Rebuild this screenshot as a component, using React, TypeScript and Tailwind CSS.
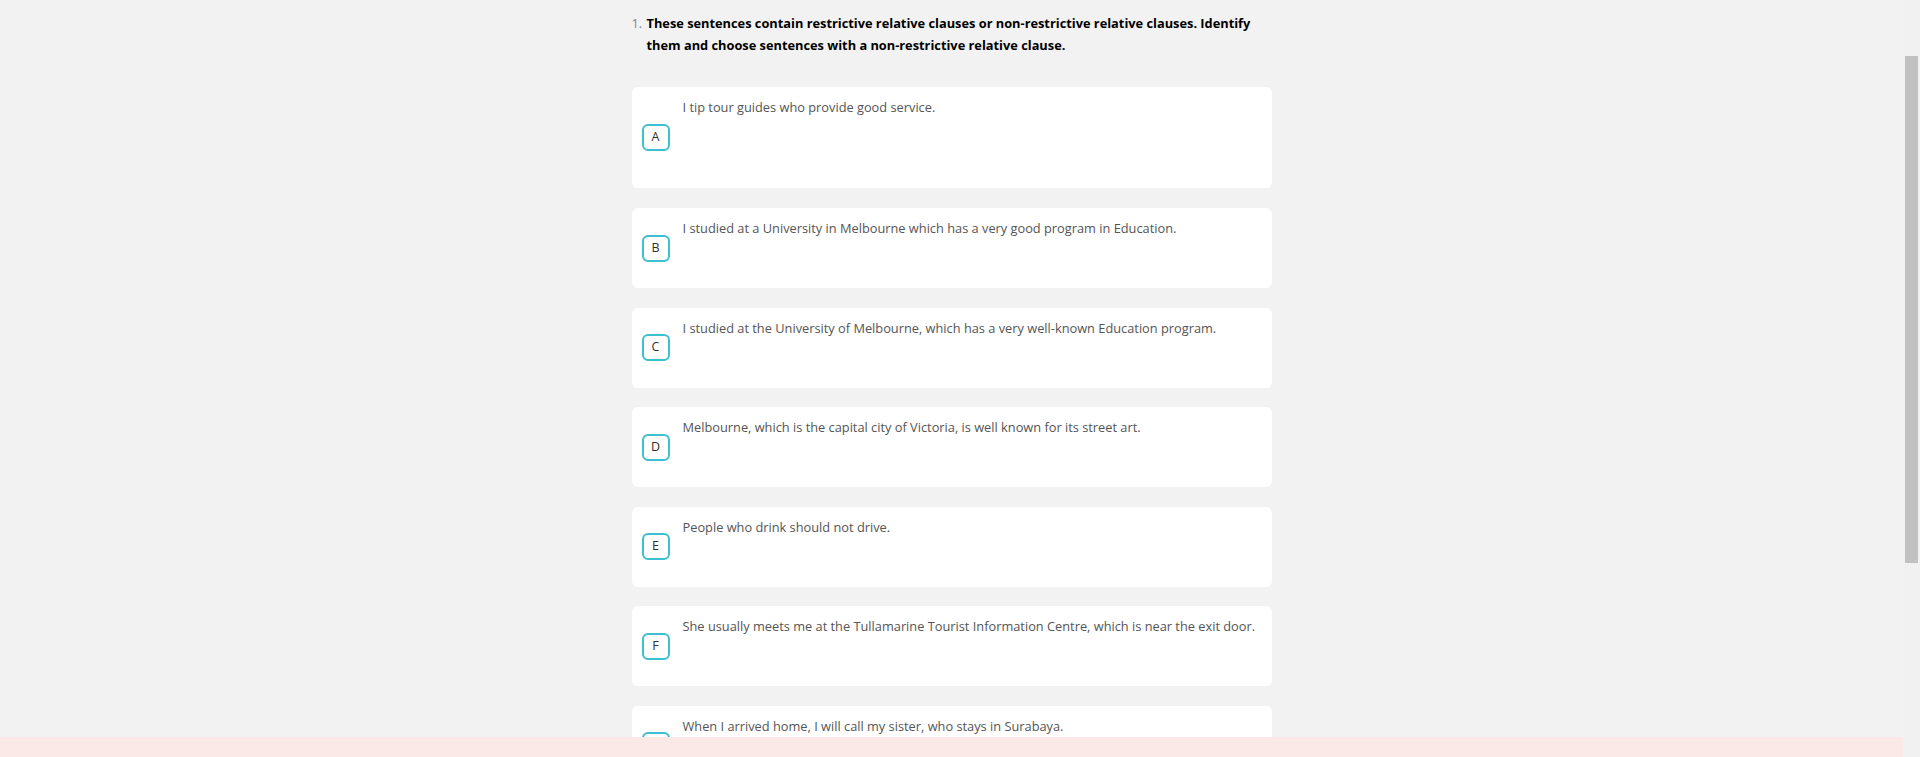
import React from "react";

const OPTIONS: { key: string; text: string; tall?: boolean }[] = [
  { key: "A", text: "I tip tour guides who provide good service.", tall: true },
  { key: "B", text: "I studied at a University in Melbourne which has a very good program in Education." },
  { key: "C", text: "I studied at the University of Melbourne, which has a very well-known Education program." },
  { key: "D", text: "Melbourne, which is the capital city of Victoria, is well known for its street art." },
  { key: "E", text: "People who drink should not drive." },
  { key: "F", text: "She usually meets me at the Tullamarine Tourist Information Centre, which is near the exit door." },
  { key: "G", text: "When I arrived home, I will call my sister, who stays in Surabaya." },
];

function OptionCard({ letter, text, tall }: { letter: string; text: string; tall?: boolean }) {
  return (
    <div
      className={
        tall
          ? "flex h-[101px] shrink-0 rounded-[6px] bg-white mb-[20px]"
          : "flex h-[80px] shrink-0 rounded-[6px] bg-white mb-[19.5px]"
      }
    >
      <div className="flex items-center pl-[10px]">
        <span className="flex h-[27px] w-[28px] items-center justify-center rounded-[6px] border-2 border-[#3cbfcf] text-[12.5px] text-[#2f2f2f]">
          {letter}
        </span>
      </div>
      <p className="pl-[13px] pt-[11px] text-[12.8px] leading-[18px] text-[#555]">{text}</p>
    </div>
  );
}

export default function App() {
  return (
    <div className="flex h-[757px] overflow-hidden bg-[#f2f2f2] font-['Open_Sans',sans-serif]">
      <div className="flex min-w-0 flex-1 flex-col">
        <main className="flex-1 overflow-hidden">
          <div className="mx-auto w-[640px] pt-[12px]">
            <div className="flex text-[12.8px] leading-[22px]">
              <span className="w-[15px] shrink-0 text-[#8a7d9e]">1.</span>
              <p className="pr-[10px] font-bold text-black">
                These sentences contain restrictive relative clauses or non-restrictive relative clauses. Identify them
                and choose sentences with a non-restrictive relative clause.
              </p>
            </div>
            <div className="mt-[31px] flex flex-col">
              {OPTIONS.map((o) => (
                <OptionCard key={o.key} letter={o.key} text={o.text} tall={o.tall} />
              ))}
            </div>
          </div>
        </main>
        <div className="h-[20px] shrink-0 bg-[#fbe9e7]" />
      </div>
      {/* scrollbar */}
      <div className="w-[17px] shrink-0 bg-[#f1f1f1] pt-[56px]">
        <div className="ml-[2px] h-[507px] w-[13px] bg-[#c1c1c1]" />
      </div>
    </div>
  );
}
